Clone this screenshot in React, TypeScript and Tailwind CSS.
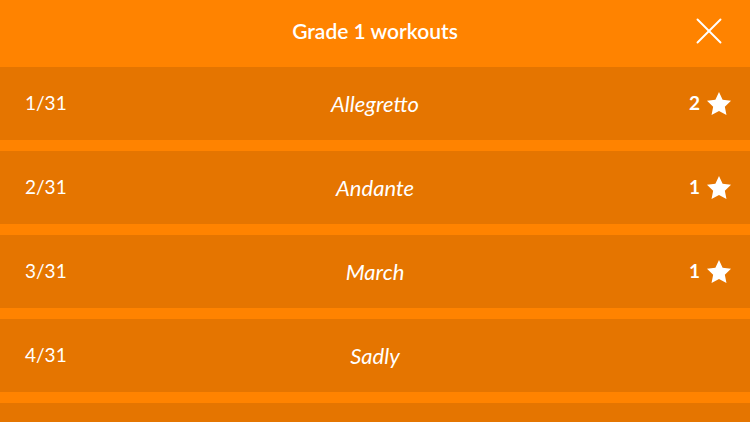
import { X } from 'lucide-react'

const workouts = [
  { n: 1, name: 'Allegretto', stars: 2 },
  { n: 2, name: 'Andante', stars: 1 },
  { n: 3, name: 'March', stars: 1 },
  { n: 4, name: 'Sadly', stars: 0 },
]

function Star() {
  return (
    <svg className="w-[28px] h-[28px]" viewBox="0 0 24 24" fill="white">
      <path d="M12 1.8l3.1 6.6 7.2.9-5.3 5 1.4 7.1L12 17.9l-6.4 3.5 1.4-7.1-5.3-5 7.2-.9z" />
    </svg>
  )
}

export default function App() {
  return (
    <div
      className="w-[750px] h-[422px] overflow-hidden bg-[#ff8300] text-white"
      style={{ fontFamily: 'Lato, "Open Sans", sans-serif' }}
    >
      <header className="relative h-[67px] flex items-center justify-center pb-[5px]">
        <h1 className="text-[21px] font-semibold">Grade 1 workouts</h1>
        <button className="absolute right-[18px] top-[8px] text-white">
          <X className="w-[46px] h-[46px]" strokeWidth={1} />
        </button>
      </header>

      <div className="flex flex-col gap-[11px]">
        {workouts.map(w => (
          <div key={w.n} className="h-[73px] shrink-0 bg-[#e57500] grid grid-cols-[1fr_auto_1fr] items-center px-[25px]">
            <span className="text-[19px]">{w.n}/31</span>
            <span className="text-[22px] italic">{w.name}</span>
            <div className="flex items-center justify-end gap-[5px] mr-[-8px]">
              {w.stars > 0 && (
                <>
                  <span className="text-[19px] font-bold">{w.stars}</span>
                  <Star />
                </>
              )}
            </div>
          </div>
        ))}
        <div className="h-[73px] shrink-0 bg-[#e57500]" />
      </div>
    </div>
  )
}
